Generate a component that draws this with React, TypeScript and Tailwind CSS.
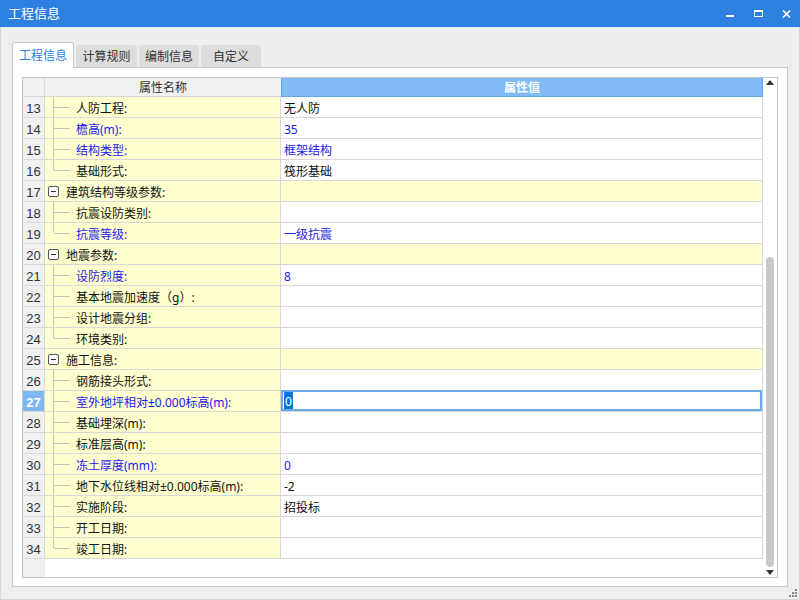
import React from "react";

type Row = {
  n: number;
  name: string;
  value?: string;
  kind: "child" | "group";
  blue?: boolean;
  last?: boolean;
  selected?: boolean;
};

const rows: Row[] = [
  { n: 13, name: "人防工程:", value: "无人防", kind: "child" },
  { n: 14, name: "檐高(m):", value: "35", kind: "child", blue: true },
  { n: 15, name: "结构类型:", value: "框架结构", kind: "child", blue: true },
  { n: 16, name: "基础形式:", value: "筏形基础", kind: "child", last: true },
  { n: 17, name: "建筑结构等级参数:", kind: "group" },
  { n: 18, name: "抗震设防类别:", value: "", kind: "child" },
  { n: 19, name: "抗震等级:", value: "一级抗震", kind: "child", blue: true, last: true },
  { n: 20, name: "地震参数:", kind: "group" },
  { n: 21, name: "设防烈度:", value: "8", kind: "child", blue: true },
  { n: 22, name: "基本地震加速度（g）:", value: "", kind: "child" },
  { n: 23, name: "设计地震分组:", value: "", kind: "child" },
  { n: 24, name: "环境类别:", value: "", kind: "child", last: true },
  { n: 25, name: "施工信息:", kind: "group" },
  { n: 26, name: "钢筋接头形式:", value: "", kind: "child" },
  { n: 27, name: "室外地坪相对±0.000标高(m):", value: "0", kind: "child", blue: true, selected: true },
  { n: 28, name: "基础埋深(m):", value: "", kind: "child" },
  { n: 29, name: "标准层高(m):", value: "", kind: "child" },
  { n: 30, name: "冻土厚度(mm):", value: "0", kind: "child", blue: true },
  { n: 31, name: "地下水位线相对±0.000标高(m):", value: "-2", kind: "child" },
  { n: 32, name: "实施阶段:", value: "招投标", kind: "child" },
  { n: 33, name: "开工日期:", value: "", kind: "child" },
  { n: 34, name: "竣工日期:", value: "", kind: "child", last: true },
];

const font = { fontFamily: '"Noto Sans", "Noto Sans CJK SC", sans-serif' };

function GridRow({ r }: { r: Row }) {
  const textColor = r.blue ? "text-[#1a1af0]" : "text-[#111111]";
  const isGroup = r.kind === "group";
  return (
    <div className="flex h-[21px] border-b border-[#d8d8d8] box-border">
      <div
        className={
          "w-[22px] flex-none border-r border-[#d8d8d8] flex items-center justify-center pt-[2px] text-[13px] leading-none " +
          (r.selected ? "bg-[#7db8f5] text-white font-bold" : "bg-[#f0f0f0] text-[#333333]")
        }
        style={{ fontFamily: '"Liberation Sans", sans-serif' }}
      >
        {r.n}
      </div>
      <div className="w-[236px] flex-none border-r border-[#d8d8d8] bg-[#ffffd0] flex items-center text-[12px] leading-none">
        {isGroup ? (
          <>
            <div className="ml-[3px] w-[11px] h-[11px] flex-none border border-[#555555] rounded-[2px] bg-white flex items-center justify-center">
              <div className="w-[5px] h-px bg-[#333333]" />
            </div>
            <span className="ml-[7px] pt-[3px] text-[#111111] whitespace-nowrap">{r.name}</span>
          </>
        ) : (
          <>
            <div className="relative w-[31px] h-full flex-none">
              <div
                className={
                  "absolute left-[8px] top-0 w-px bg-[#c4c4c4] " + (r.last ? "h-[10px]" : "h-full")
                }
              />
              <div className="absolute left-[9px] top-[10px] w-[16px] h-px bg-[#c4c4c4]" />
            </div>
            <span className={"pt-[3px] whitespace-nowrap " + textColor}>{r.name}</span>
          </>
        )}
      </div>
      <div
        className={
          "flex-1 border-r border-[#d8d8d8] flex items-center text-[12px] leading-none " +
          (isGroup ? "bg-[#ffffd0]" : "bg-white")
        }
      >
        {r.selected ? (
          <div className="w-full h-[21px] -mt-px border-2 border-[#6aa8e8] flex items-center">
            <span className="ml-[1px] bg-[#0a74d8] text-white px-[1px] h-[17px] pt-[2px] flex items-center">0</span>
          </div>
        ) : (
          <span className={"ml-[3px] pt-[3px] whitespace-nowrap " + textColor}>{r.value}</span>
        )}
      </div>
    </div>
  );
}

export default function App() {
  return (
    <div className="w-[800px] h-[600px] bg-[#eeeeee] flex flex-col overflow-hidden" style={font}>
      {/* Title bar */}
      <div className="h-[27px] flex-none bg-[#2d7fe0] flex items-center text-white">
        <span className="ml-[8px] text-[13px] leading-none">工程信息</span>
        <div className="flex-1" />
        <div className="w-[8px] h-[2px] bg-white mt-[5px]" />
        <div className="ml-[20px] w-[9px] h-[7px] border border-white border-t-2 box-border" />
        <svg className="ml-[19px] mr-[9px]" width="9" height="8" viewBox="0 0 9 8">
          <path d="M1 0.5 L8 7.5 M8 0.5 L1 7.5" stroke="white" strokeWidth="1.6" />
        </svg>
      </div>

      {/* Body */}
      <div className="flex-1 flex flex-col border-l border-r border-b border-[#d6d6d6] relative">
        {/* Tabs */}
        <div className="flex items-end gap-[2px] ml-[11px] mt-[15px] h-[25px] text-[12px] leading-none">
          <div className="w-[62px] h-[26px] -mb-px bg-white border border-b-0 border-[#c8c8c8] rounded-t-[3px] flex items-center justify-center pt-[1px] text-[#2d7fe0] relative z-10">
            工程信息
          </div>
          <div className="w-[61px] h-[22px] bg-[#dddddd] rounded-t-[3px] flex items-center justify-center pt-[2px] text-[#333333]">
            计算规则
          </div>
          <div className="w-[60px] h-[22px] bg-[#dddddd] rounded-t-[3px] flex items-center justify-center pt-[2px] text-[#333333]">
            编制信息
          </div>
          <div className="w-[60px] h-[22px] bg-[#dddddd] rounded-t-[3px] flex items-center justify-center pt-[2px] text-[#333333]">
            自定义
          </div>
        </div>

        {/* Panel */}
        <div className="ml-[11px] mr-[11px] h-[520px] bg-white border border-[#c8c8c8] pt-[9px] px-[9px]">
          <div className="h-[501px] border border-[#c4c4c4] flex">
            {/* Table */}
            <div className="flex-1 flex flex-col">
              {/* header */}
              <div className="flex h-[19px] flex-none text-[12px] leading-none">
                <div className="w-[22px] flex-none bg-[#f0f0f0] border-r border-b border-[#d8d8d8]" />
                <div className="w-[236px] flex-none bg-[#f0f0f0] border-b border-[#d8d8d8] flex items-center justify-center pt-[2px] text-[#333333]">
                  属性名称
                </div>
                <div className="flex-1 bg-[#80bbf8] border border-t-0 border-[#66a6ec] flex items-center justify-center pt-[2px] text-white font-bold">
                  属性值
                </div>
              </div>
              {rows.map((r) => (
                <GridRow key={r.n} r={r} />
              ))}
              <div className="flex-1 flex">
                <div className="w-[22px] flex-none bg-[#f0f0f0]" />
                <div className="flex-1 bg-white" />
              </div>
            </div>
            {/* Scrollbar */}
            <div className="w-[14px] flex-none bg-white flex flex-col items-center">
              <svg className="mt-[2px]" width="8" height="5" viewBox="0 0 8 5">
                <path d="M0 5 L4 0 L8 5 Z" fill="#333333" />
              </svg>
              <div className="mt-[172px] w-[8px] h-[310px] rounded-full bg-[#c8c8c8]" />
              <svg className="mt-[3px]" width="8" height="5" viewBox="0 0 8 5">
                <path d="M0 0 L8 0 L4 5 Z" fill="#333333" />
              </svg>
            </div>
          </div>
        </div>

        {/* resize grip */}
        <div className="absolute right-[2px] bottom-[2px] grid grid-cols-3 gap-[1px]">
          <div className="w-[2px] h-[2px]" />
          <div className="w-[2px] h-[2px]" />
          <div className="w-[2px] h-[2px] bg-[#8a8a8a]" />
          <div className="w-[2px] h-[2px]" />
          <div className="w-[2px] h-[2px] bg-[#8a8a8a]" />
          <div className="w-[2px] h-[2px] bg-[#8a8a8a]" />
          <div className="w-[2px] h-[2px] bg-[#8a8a8a]" />
          <div className="w-[2px] h-[2px] bg-[#8a8a8a]" />
          <div className="w-[2px] h-[2px] bg-[#8a8a8a]" />
        </div>
      </div>
    </div>
  );
}
